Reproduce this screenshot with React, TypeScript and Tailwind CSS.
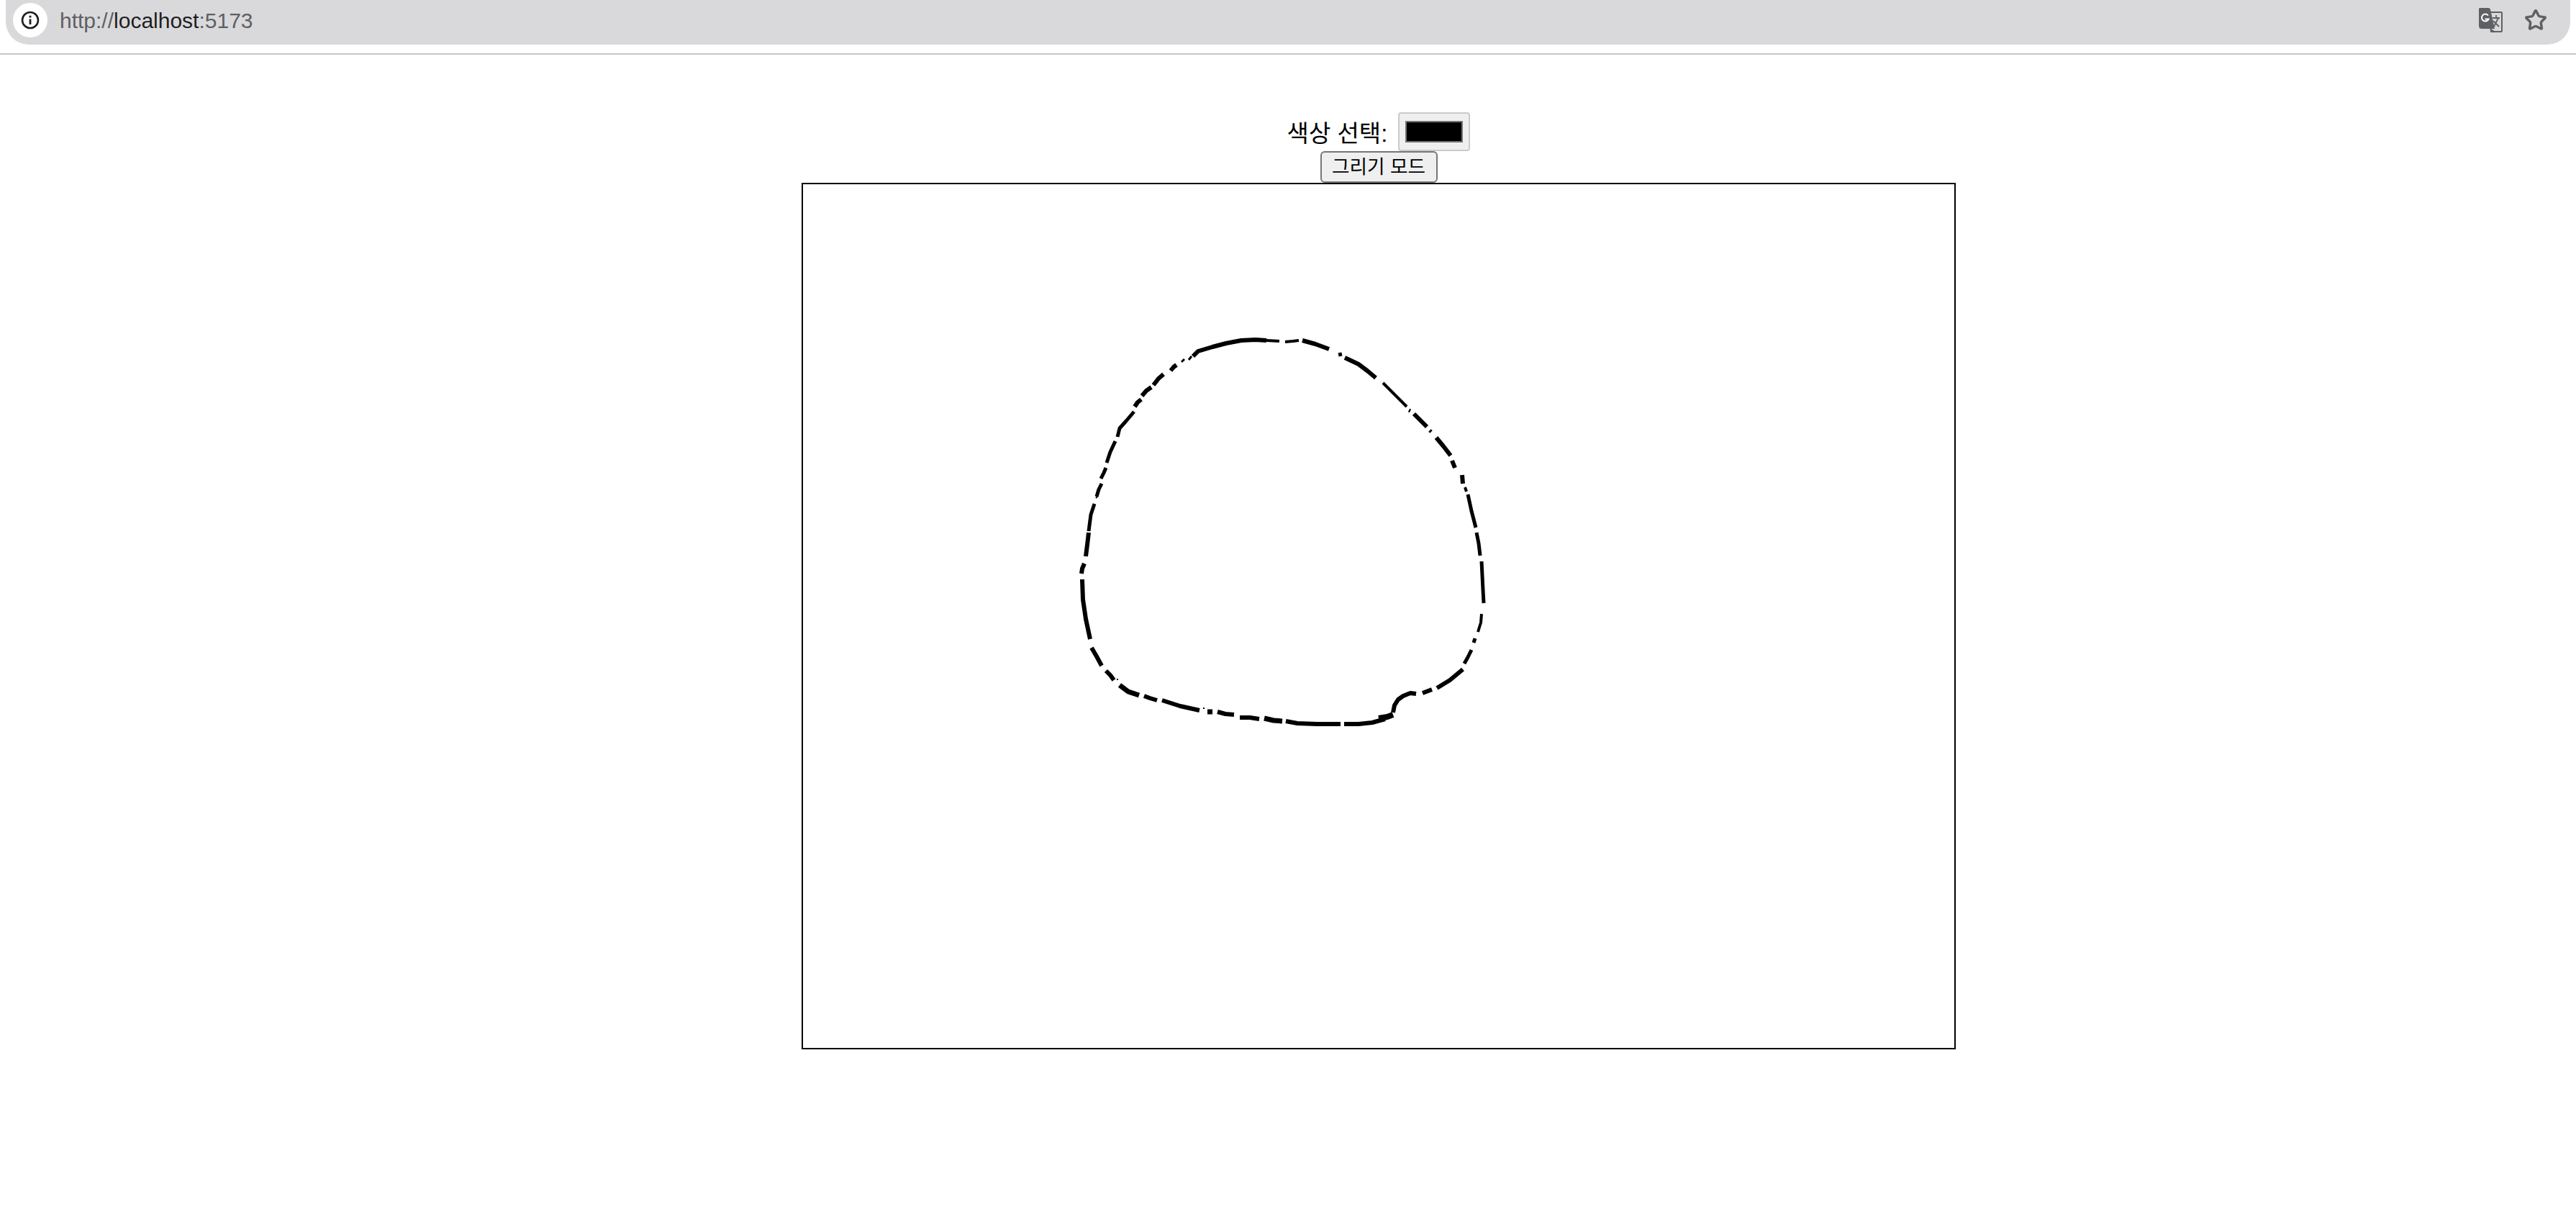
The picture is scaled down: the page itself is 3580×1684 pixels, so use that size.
import { Star } from 'lucide-react';

// stroke pieces of the freehand drawing, in page pixels
const strokes: [number, string][] = [
  [5, '1513,738 1516,715 1521,700'],
  [2, '1523,692 1525,690'],
  [5, '1524,690 1527,680 1531,672'],
  [5, '1530,665 1534,657 1537,650'],
  [5, '1538,643 1543,628 1550,613'],
  [5, '1553,607 1556,595 1565,585 1576,572'],
  [6, '1577,565 1581,559 1586,555'],
  [6, '1587,550 1593,543 1600,538'],
  [6, '1603,535 1610,526 1617,520'],
  [6, '1627,515 1631,510 1635,507'],
  [3, '1642,503 1646,499'],
  [3, '1652,500 1656,495'],
  [6, '1658,495 1665,488 1685,482 1704,477 1725,473 1745,472 1760,473'],
  [4, '1760,473 1778,474'],
  [4, '1786,475 1797,474 1805,473'],
  [6, '1810,473 1828,478 1847,485'],
  [5, '1862,490 1863,495'],
  [6, '1869,497 1888,506 1900,515 1912,525'],
  [4, '1922,532 1938,548 1955,565'],
  [5, '1958,570 1960,571'],
  [6, '1965,575 1975,585 1983,593'],
  [5, '1987,598 1989,600'],
  [6, '1996,608 2006,620 2016,633'],
  [6, '2018,640 2022,650'],
  [6, '2032,660 2033,672'],
  [4, '2036,677 2038,683'],
  [5, '2040,687 2045,710 2051,733'],
  [5, '2052,740 2055,755 2057,772'],
  [5, '2059,780 2060,800 2061,820 2062,838'],
  [4, '2059,853 2058,865 2054,878'],
  [5, '2050,887 2048,893'],
  [5, '2045,903 2040,913 2035,922'],
  [6, '2033,930 2015,945 1997,956'],
  [6, '1990,958 1977,963'],
  [6, '1968,964 1960,963 1950,967 1943,972 1938,980 1936,990'],
  [8, '1936,993 1928,996 1916,998'],
  [6, '1925,999 1907,1004 1888,1006 1868,1006'],
  [6, '1863,1006 1830,1006 1803,1005 1787,1002'],
  [7, '1782,1002 1770,1001 1757,998'],
  [6, '1750,999 1737,997 1723,997'],
  [6, '1715,993 1703,992 1692,989'],
  [7, '1678,989 1685,989'],
  [2, '1672,984 1674,984'],
  [6, '1667,987 1640,981 1615,973'],
  [6, '1608,973 1598,970 1590,967'],
  [7, '1583,966 1568,961 1556,952'],
  [2, '1552,944 1554,944'],
  [6, '1548,945 1543,938 1537,932'],
  [6, '1531,925 1524,912 1517,900'],
  [6, '1515,888 1509,860 1505,833 1504,805'],
  [6, '1503,797 1504,790 1507,783'],
  [6, '1509,773 1511,757 1513,740'],
];

export default function App() {
  return (
    <div className="min-h-[1684px] bg-white font-['Liberation_Sans','Noto_Sans_CJK_KR',sans-serif] text-black">
      <div className="h-[76px] border-b-2 border-[#c8c8ca] pl-[8px] pr-[8px]">
        <div className="flex h-[62px] items-center rounded-b-[32px] bg-[#d9d9dc] pb-[6px] pl-[10px] pr-[32px]">
          <div className="flex h-[48px] w-[48px] items-center justify-center rounded-full bg-white">
            <svg width="26" height="26" viewBox="0 0 26 26" fill="none" stroke="#1f1f1f" strokeWidth="2.6">
              <circle cx="13" cy="13" r="11" />
              <path d="M13 11.500v7.500M13 6.800v2.600" strokeWidth="2.800" />
            </svg>
          </div>
          <div className="ml-[17px] text-[30px] text-[#5f6063]">
            http://<span className="text-[#1f1f1f]">localhost</span>:5173
          </div>
          <div className="ml-auto flex items-center gap-[30px]">
            <svg width="34" height="34" viewBox="0 0 34 34" fill="none">
              <path d="M15 6h17a1 1 0 0 1 1 1v25a1 1 0 0 1-1 1H18z" stroke="#5f6063" strokeWidth="2" />
              <path d="M2 0h12a3 3 0 0 1 3 2l6 27H5a4 4 0 0 1-4-4V1z" fill="#5f6063" />
              <path d="M14 10.500a5 5 0 1 0 .6 5H9.500" stroke="#fff" strokeWidth="2" />
              <path d="M20 14h10M25 10v4M22 26l6-12M21 18l8 8" stroke="#5f6063" strokeWidth="1.800" />
              <path d="M18 29l1 4h5z" fill="#5f6063" />
            </svg>
            <Star size={32} strokeWidth={2.6} className="text-[#5f6063]" />
          </div>
        </div>
      </div>
      <div className="flex flex-col items-center pl-[252px] pt-[80px]">
        <div className="flex h-[54px] items-center text-[33px] leading-none">
          <label className="pt-[4px]">색상 선택:</label>
          <div className="ml-[15px] flex h-[54px] w-[100px] items-center justify-center rounded-[4px] border-2 border-[#cbcbcb] bg-[#efefef]">
            <div className="h-[30px] w-[80px] border-2 border-[#767676] bg-black" />
          </div>
        </div>
        <button className="h-[44px] w-[163px] rounded-[6px] border-2 border-[#767676] bg-[#efefef] text-[26.67px] leading-none">
          그리기 모드
        </button>
        <div className="h-[1204px] w-[1604px] border-2 border-black">
          <svg width="1600" height="1200" viewBox="1116 256 1600 1200" className="block" fill="none" stroke="#000" strokeLinejoin="round">
            {strokes.map(([w, pts], i) => (
              <polyline key={i} points={pts} strokeWidth={w} />
            ))}
          </svg>
        </div>
      </div>
    </div>
  );
}
